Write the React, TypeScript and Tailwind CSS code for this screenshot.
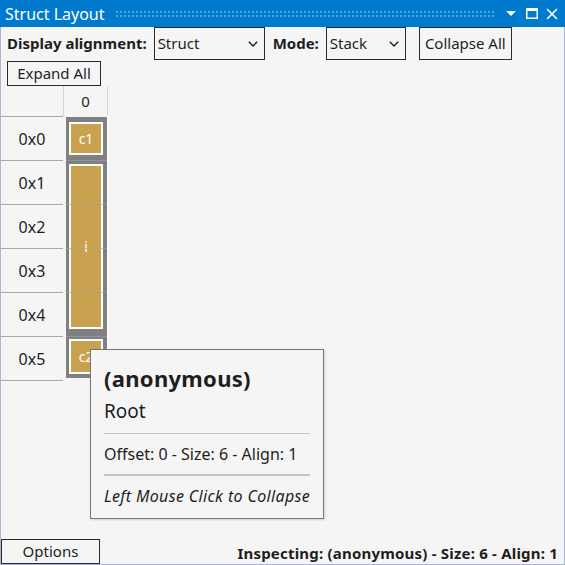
import { ReactNode } from 'react';

const rows = ['0x0', '0x1', '0x2', '0x3', '0x4', '0x5'];

function Chevron() {
  return (
    <svg width="10" height="6" viewBox="0 0 10 6" className="shrink-0">
      <polyline points="0.8,0.8 5,5 9.2,0.8" fill="none" stroke="#1e1e1e" strokeWidth="1.4" />
    </svg>
  );
}

function Select({ value, width }: { value: string; width: string }) {
  return (
    <div className={`${width} h-full border border-[#2b2b2b] flex items-center justify-between pl-[3px] pr-[6px]`}>
      <span>{value}</span>
      <Chevron />
    </div>
  );
}

function Button({ children, className }: { children: ReactNode; className: string }) {
  return (
    <div className={`${className} border border-[#2b2b2b] flex items-center justify-center`}>{children}</div>
  );
}

function Block({ label, className }: { label: string; className: string }) {
  return (
    <div className={`${className} w-[34px] border-2 border-white bg-[#c9a24f] flex items-center justify-center text-white text-[14px]`}>
      {label}
    </div>
  );
}

export default function App() {
  return (
    <div className="w-[565px] h-[565px] flex flex-col bg-[#f5f5f5] text-[#1e1e1e] font-['Noto_Sans',sans-serif] text-[15px] relative overflow-hidden">
      {/* title bar */}
      <div className="h-[27px] bg-[#007acc] flex items-center shrink-0">
        <span className="text-white text-[16px] pl-[5px] leading-none">Struct Layout</span>
        <div className="ml-[10px] w-[380px] h-[8px] bg-[radial-gradient(#4ea6e6_0.9px,transparent_1px)] bg-[length:4px_4px]" />
        <svg width="10" height="5" viewBox="0 0 10 5" className="ml-[11px]">
          <polygon points="0,0 10,0 5,5" fill="white" />
        </svg>
        <svg width="12" height="11" viewBox="0 0 12 11" className="ml-[10px]">
          <rect x="0.75" y="1.5" width="10.5" height="8.75" fill="none" stroke="white" strokeWidth="1.5" />
          <rect x="0" y="0" width="12" height="3" fill="white" />
        </svg>
        <svg width="12" height="12" viewBox="0 0 12 12" className="ml-[8px]">
          <path d="M1 1 L11 11 M11 1 L1 11" stroke="white" strokeWidth="1.6" />
        </svg>
      </div>

      <div className="flex-1 flex flex-col border-x border-b border-[#aeb4d4]">
        {/* toolbar */}
        <div className="h-[33px] flex items-stretch pl-[6px]">
          <span className="font-bold self-center">Display alignment:</span>
          <div className="ml-[7px] flex">
            <Select value="Struct" width="w-[111px]" />
          </div>
          <span className="ml-[8px] font-bold self-center">Mode:</span>
          <div className="ml-[7px] flex">
            <Select value="Stack" width="w-[80px]" />
          </div>
          <Button className="ml-[13px] w-[93px]">Collapse All</Button>
        </div>
        <div className="h-[25px] mt-[1px] pl-[6px] flex">
          <Button className="w-[94px]">Expand All</Button>
        </div>

        {/* layout grid */}
        <div className="flex flex-col">
          <div className="h-[30px] flex">
            <div className="w-[62px]" />
            <div className="w-[45px] border-x border-[#d6d6d6] flex items-center justify-center">0</div>
          </div>
          <div className="flex">
            <div className="w-[62px] border-t border-[#a9a9a9] text-[16px]">
              {rows.map((r) => (
                <div key={r} className="h-[44px] border-b border-[#a9a9a9] flex items-center justify-center">
                  {r}
                </div>
              ))}
            </div>
            <div className="ml-[3px] pt-px">
              <div className="relative w-[41px] h-[261px] bg-[#808080] flex flex-col pl-[3px] pt-[5px] pb-[4px]">
                <Block label="c1" className="h-[33px]" />
                <Block label="i" className="h-[165px] mt-[9px]" />
                <Block label="c2" className="h-[35px] mt-[10px]" />
                {[43, 87, 131, 175, 219].map((t) => (
                  <div key={t} className="absolute left-0 right-0 h-px bg-[rgba(160,160,160,0.6)]" style={{ top: t }} />
                ))}
              </div>
            </div>
            <div className="w-px bg-white/80" />
          </div>
        </div>

        {/* status bar */}
        <div className="mt-auto h-[25px] flex items-end justify-between">
          <Button className="w-[99px] h-[25px]">Options</Button>
          <span className="font-bold pr-[6px] leading-[22px] tracking-[0.2px]">Inspecting: (anonymous) - Size: 6 - Align: 1</span>
        </div>
      </div>

      {/* tooltip */}
      <div className="absolute left-[90px] top-[349px] w-[234px] h-[170px] border border-[#767676] bg-[#f5f5f5] shadow-[1px_1px_2px_rgba(0,0,0,0.15)] px-[13px] pt-[15px]">
        <div className="text-[22px] leading-[26px] font-bold tracking-[0.3px]">(anonymous)</div>
        <div className="mt-[8px] text-[19px] leading-[24px]">Root</div>
        <div className="mt-[10px] h-px bg-[#c4c4c4]" />
        <div className="mt-[10px] text-[16px] leading-[20px]">Offset: 0 - Size: 6 - Align: 1</div>
        <div className="mt-[10px] h-[2px] bg-[#c4c4c4]" />
        <div className="mt-[10px] text-[16px] leading-[20px] italic tracking-[0.35px] whitespace-nowrap">Left Mouse Click to Collapse</div>
      </div>
    </div>
  );
}
